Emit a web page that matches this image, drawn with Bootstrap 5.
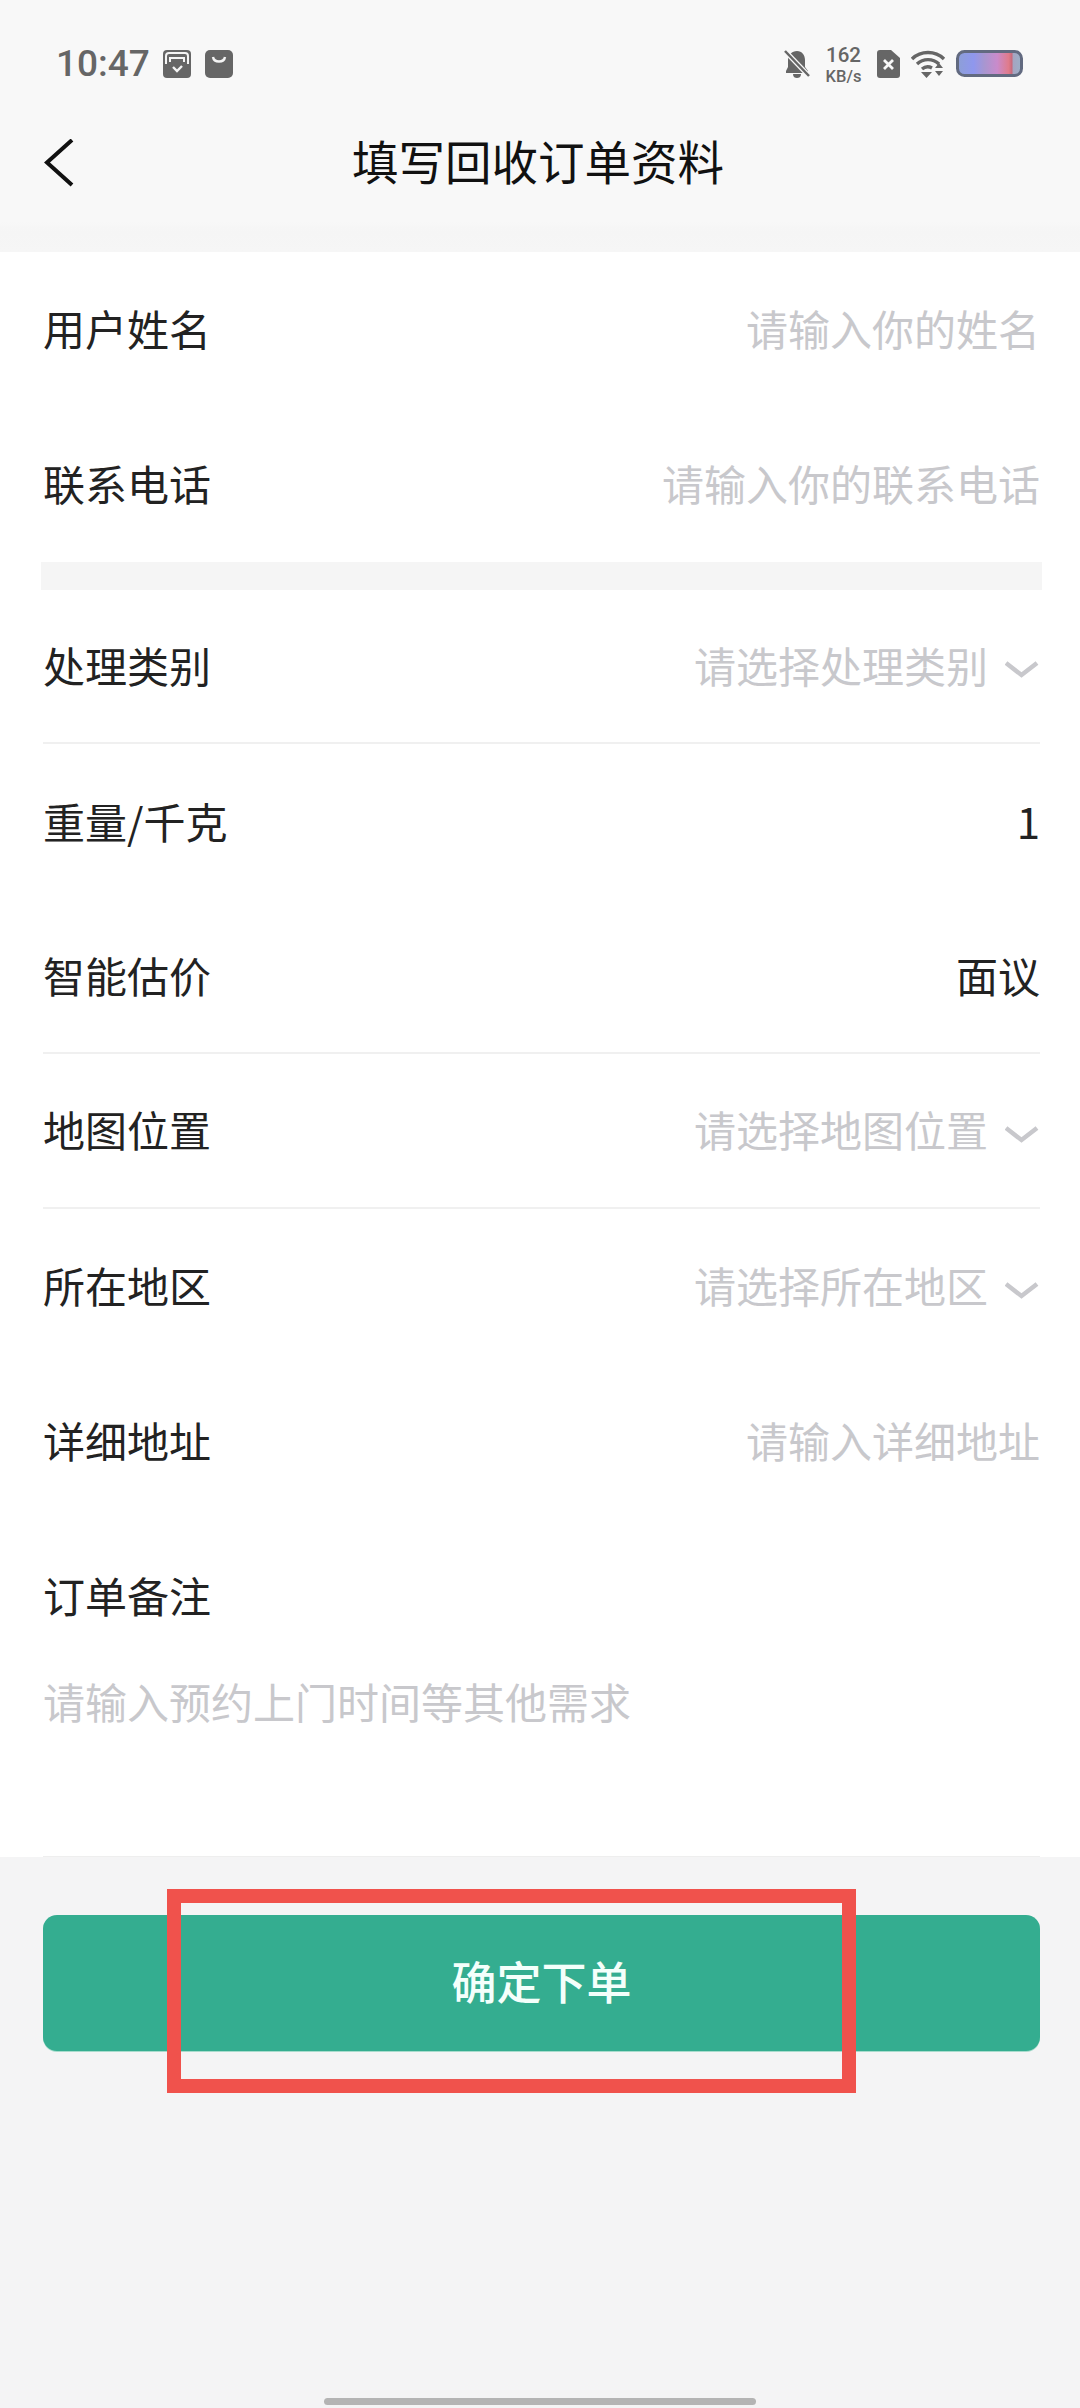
<!DOCTYPE html>
<html lang="zh-CN">
<head>
<meta charset="utf-8">
<title>填写回收订单资料</title>
<link href="https://cdn.jsdelivr.net/npm/bootstrap@5.3.0/dist/css/bootstrap.min.css" rel="stylesheet">
<style>
html,body{margin:0;background:#f4f4f5}
body{font-family:"Noto Sans CJK SC","Liberation Sans",sans-serif;color:#222}
.phone{position:relative;width:1080px;height:2408px;overflow:hidden;background:#f4f4f5}
.top-area{height:252px;background:linear-gradient(#f8f8f8 0,#f8f8f8 222px,#f5f5f5 232px,#f6f6f6 252px)}
.status-row{height:126px;padding:47px 57px 0 56px;align-items:flex-start}
.clock{width:93px;font:500 37px/34px Roboto,sans-serif;color:#666;white-space:nowrap}
.stat-left{gap:14px}
.stat-right{margin-top:3px}
.speed{width:37px;margin:-5px 15px 0 15px;text-align:center;font-family:Roboto,sans-serif;font-weight:500;color:#666}
.speed-a{font-size:20.500px;line-height:21px}
.speed-b{font-size:16.500px;line-height:21px;white-space:nowrap;margin-left:-2px;margin-right:-2px}
.wifi-ic{margin-left:11px}
.batt-ic{margin-left:10px}
.title-row{height:76px}
.back-link{margin-left:44px;width:32px;height:48px;margin-bottom:2px}
.page-title{font-size:46.5px;line-height:60px;color:#111;margin:0 0 8px 276px;font-weight:400;white-space:nowrap}
.sheet{background:#fff;padding:0 40px 0 43px;height:1605px}
.line-row{height:154.800px;padding-bottom:2px;font-size:42px;line-height:56px}
.line-row.ruled{border-bottom:2px solid #f0f0f0}
.gap-band{height:28px;margin:0 -2px;background:#f5f5f5}
.hint{color:#c8c8cc}
.val{color:#222}
.chev{width:35px;height:20px;margin:11px 0 0 17px;flex:none}
.note-hint{font-size:42px;line-height:56px;border-bottom:1px solid #eeeeee}
.submit-wrap{padding:58px 40px 0 43px}
.submit-btn{display:block;width:100%;height:136px;background:#34ad90;border:0;border-radius:14px;color:#f4fffb;font-size:45px;font-weight:500;line-height:60px;padding:0 0 4px;box-shadow:0 1px 0 #a8dccd}
.redbox{position:absolute;left:167px;top:1889px;width:689px;height:204px;border:14px solid #f0524c;pointer-events:none}
.home-bar{position:absolute;left:324px;top:2398px;width:432px;height:7px;border-radius:4px;background:#b4b4b4}
</style>
</head>
<body>
<div class="phone">
  <div class="top-area">
    <div class="status-row d-flex justify-content-between">
      <div class="d-flex align-items-center stat-left">
        <span class="clock">10:47</span>
        <svg width="28" height="28" viewBox="0 0 28 28"><rect width="28" height="28" rx="4" fill="#666"/><path d="M3 14V6a3 3 0 0 1 3-3h16a3 3 0 0 1 3 3v8" fill="none" stroke="#f4f4f4" stroke-width="2"/><path d="M7 12V8h14v4" fill="none" stroke="#f4f4f4" stroke-width="2"/><path d="M10 17l4 4 5-5" fill="none" stroke="#f4f4f4" stroke-width="2.400"/></svg>
        <svg width="28" height="28" viewBox="0 0 28 28"><rect width="28" height="28" rx="5" fill="#666"/><path d="M8 7c1 6 11 6 12 0" fill="none" stroke="#f4f4f4" stroke-width="2.400"/></svg>
      </div>
      <div class="d-flex align-items-start stat-right">
        <svg width="26" height="28" viewBox="0 0 26 28"><path d="M13 1c5 0 8 4 8 9v7l3 4v2H2v-2l2-4v-7c0-5 4-9 9-9zM9 24h8c0 3-2 4-4 4s-4-1-4-4z" fill="#666"/><path d="M1 1l24 25" stroke="#f8f8f8" stroke-width="5"/><path d="M1 1l24 25" stroke="#666" stroke-width="2.500"/></svg>
        <div class="speed"><div class="speed-a">162</div><div class="speed-b">KB/s</div></div>
        <svg width="23" height="28" viewBox="0 0 23 28"><path d="M3 0h11l9 8v17a3 3 0 0 1-3 3H3a3 3 0 0 1-3-3V3a3 3 0 0 1 3-3z" fill="#666"/><path d="M7 10l9 9M16 10l-9 9" stroke="#f8f8f8" stroke-width="2.800"/></svg>
        <svg width="35" height="28" viewBox="0 0 35 28" class="wifi-ic"><path d="M1 9a23 23 0 0 1 32 0M6 14a16 16 0 0 1 22 0M11 19a9 9 0 0 1 10-1" fill="none" stroke="#666" stroke-width="3.400"/><path d="M10 22h11l-5.500 6zM24 18l4-5 4 5zM24 21h8l-4 5z" fill="#666"/></svg>
        <svg width="67" height="27" viewBox="0 0 67 27" class="batt-ic"><defs><linearGradient id="bt"><stop offset="0" stop-color="#8d9fd6"/><stop offset=".25" stop-color="#8f97ee"/><stop offset=".42" stop-color="#a896d0"/><stop offset=".62" stop-color="#c98bcb"/><stop offset=".8" stop-color="#e07b8a"/><stop offset=".85" stop-color="#c66a7c"/><stop offset=".87" stop-color="#a5a5c0"/><stop offset="1" stop-color="#9bb0c8"/></linearGradient></defs><rect x="1.500" y="1.500" width="64" height="24" rx="7" fill="url(#bt)" stroke="#626a80" stroke-width="3"/></svg>
      </div>
    </div>
    <div class="title-row d-flex align-items-center">
      <a class="back-link d-block" href="#" aria-label="返回"><svg width="32" height="48" viewBox="0 0 32 48"><path d="M28 1L3 23.500 28 46" fill="none" stroke="#111" stroke-width="4"/></svg></a>
      <h1 class="page-title">填写回收订单资料</h1>
    </div>
  </div>

  <div class="sheet d-flex flex-column">
    <div class="line-row d-flex justify-content-between align-items-center"><span>用户姓名</span><span class="hint">请输入你的姓名</span></div>
    <div class="line-row d-flex justify-content-between align-items-center"><span>联系电话</span><span class="hint">请输入你的联系电话</span></div>
    <div class="gap-band"></div>
    <div class="line-row ruled d-flex justify-content-between align-items-center"><span>处理类别</span><span class="hint d-flex align-items-center">请选择处理类别<svg class="chev" viewBox="0 0 35 20"><path d="M1 3l15.500 12L32 3" fill="none" stroke="#c8c8cc" stroke-width="4.500"/></svg></span></div>
    <div class="line-row d-flex justify-content-between align-items-center"><span>重量/千克</span><span class="val">1</span></div>
    <div class="line-row ruled d-flex justify-content-between align-items-center"><span>智能估价</span><span class="val">面议</span></div>
    <div class="line-row ruled d-flex justify-content-between align-items-center"><span>地图位置</span><span class="hint d-flex align-items-center">请选择地图位置<svg class="chev" viewBox="0 0 35 20"><path d="M1 3l15.500 12L32 3" fill="none" stroke="#c8c8cc" stroke-width="4.500"/></svg></span></div>
    <div class="line-row d-flex justify-content-between align-items-center"><span>所在地区</span><span class="hint d-flex align-items-center">请选择所在地区<svg class="chev" viewBox="0 0 35 20"><path d="M1 3l15.500 12L32 3" fill="none" stroke="#c8c8cc" stroke-width="4.500"/></svg></span></div>
    <div class="line-row d-flex justify-content-between align-items-center"><span>详细地址</span><span class="hint">请输入详细地址</span></div>
    <div class="line-row d-flex align-items-center"><span>订单备注</span></div>
    <div class="note-hint hint flex-grow-1">请输入预约上门时间等其他需求</div>
  </div>

  <div class="submit-wrap">
    <button type="button" class="btn submit-btn">确定下单</button>
  </div>

  <div class="redbox"></div>
  <div class="home-bar"></div>
</div>
<script src="https://cdn.jsdelivr.net/npm/bootstrap@5.3.0/dist/js/bootstrap.bundle.min.js"></script>
</body>
</html>
